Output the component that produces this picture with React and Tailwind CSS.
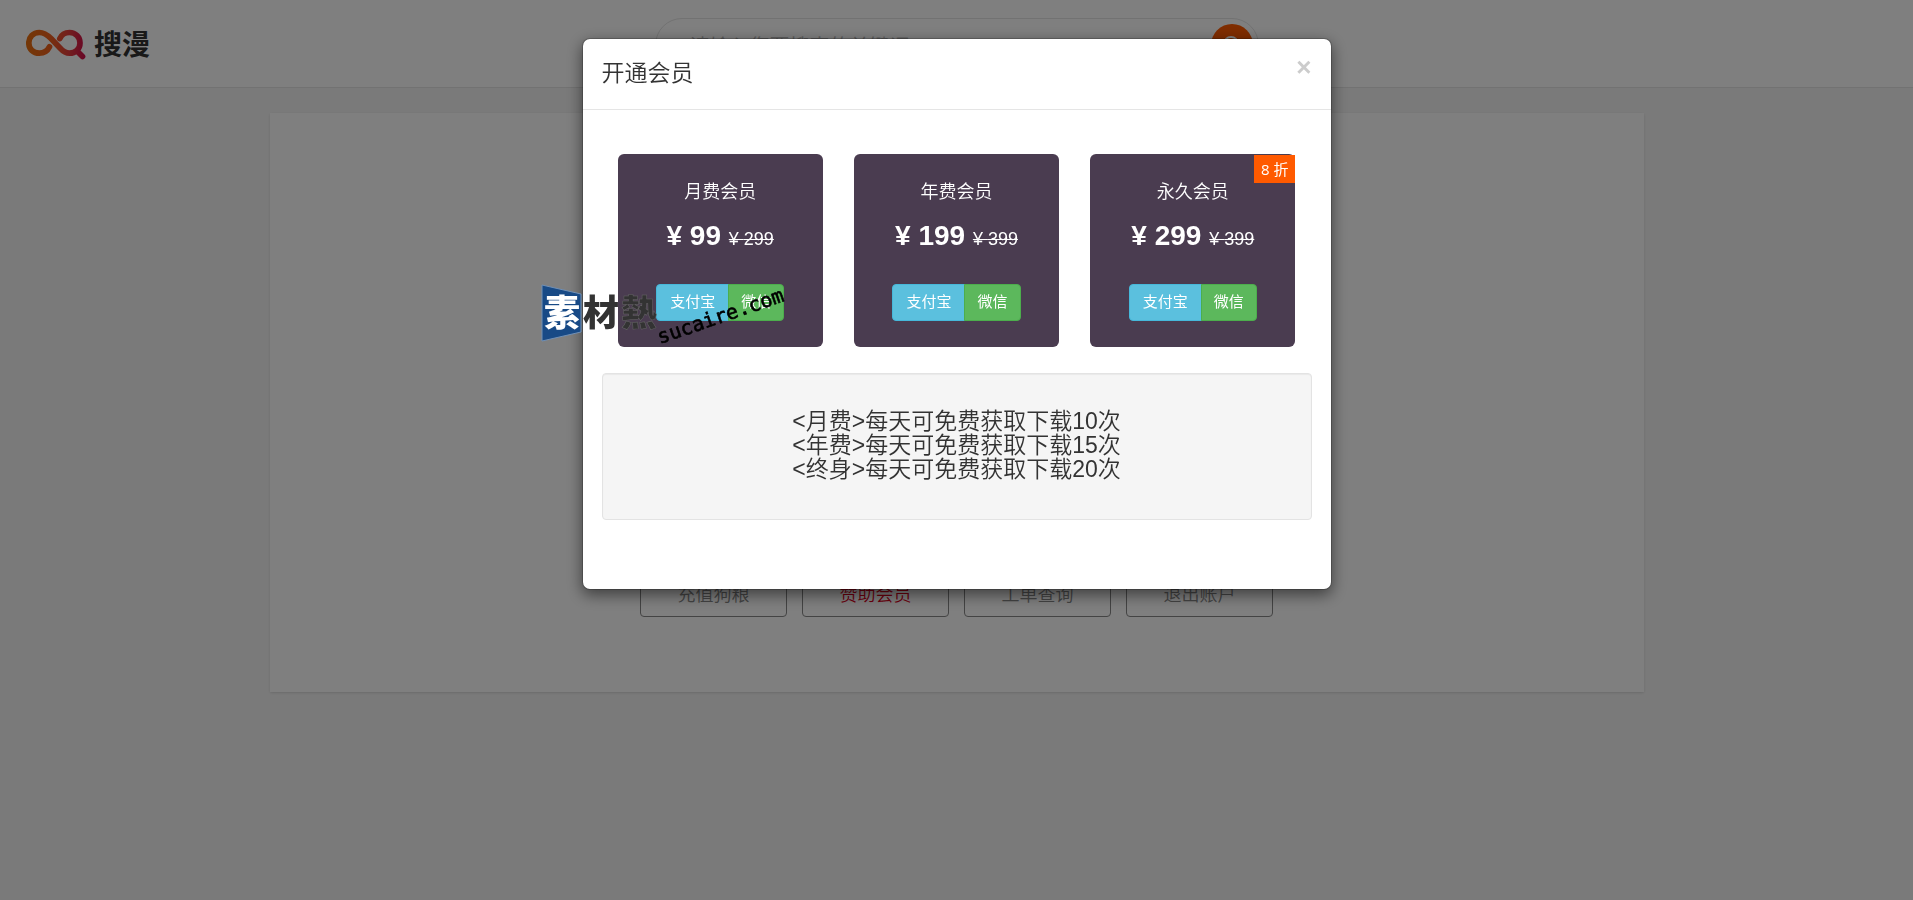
import React from 'react'

const plans = [
  { name: '月费会员', price: 99, old: 299 },
  { name: '年费会员', price: 199, old: 399 },
  { name: '永久会员', price: 299, old: 399, badge: '8 折' },
]

const notes = ['<月费>每天可免费获取下载10次', '<年费>每天可免费获取下载15次', '<终身>每天可免费获取下载20次']

const actions = [
  { label: '充值狗粮' },
  { label: '赞助会员', active: true },
  { label: '工单查询' },
  { label: '退出账户' },
]

function Logo() {
  return (
    <a href="#" className="flex items-center gap-2">
      <svg width="60" height="32" viewBox="0 0 60 32" fill="none" aria-hidden="true">
        <defs>
          <linearGradient id="logo" x1="0" y1="0" x2="60" y2="0" gradientUnits="userSpaceOnUse">
            <stop offset="0" stopColor="#e8700f" />
            <stop offset="0.4" stopColor="#f0601c" />
            <stop offset="0.7" stopColor="#e6403c" />
            <stop offset="1" stopColor="#d00a4c" />
          </linearGradient>
        </defs>
        <path
          d="M23.5 18.8C21.5 23 18 25.2 13.3 25.200C7.200 25.200 2.800 21 2.800 15C2.800 9 7.200 4.500 13.300 4.500C18 4.500 21.500 7 25 10.500L34 20C37 23.300 39.500 25.200 43.500 25.200C49.500 25.200 54 21 54 15C54 9 49.500 4.500 43.500 4.500C39 4.500 35.500 6.800 33.800 10.600M51.500 23.500L56.500 28.500"
          stroke="url(#logo)"
          strokeWidth="5.700"
          strokeLinecap="round"
          strokeLinejoin="round"
        />
      </svg>
      <span className="pt-1 text-[28px] leading-8 font-bold text-[#333]">搜漫</span>
    </a>
  )
}

function Header() {
  return (
    <header className="relative flex h-[88px] items-center border-b border-[#e4e4e4] bg-white px-[26px]">
      <Logo />
      <form className="absolute top-[18px] left-1/2 flex h-[54px] w-[604px] -translate-x-1/2 items-center rounded-full border border-[#e4e4e4] pr-[5px] pl-[34px]">
        <input
          type="text"
          aria-label="搜索"
          placeholder="请输入您要搜索的关键词"
          className="min-w-0 flex-1 pt-1 text-xl outline-none placeholder:text-[#bbb]"
        />
        <button type="button" aria-label="搜索" className="flex h-[42px] w-[42px] items-center justify-center rounded-full bg-[#ff5a00] text-white">
          <svg width="18" height="18" viewBox="0 0 18 18" fill="none" stroke="currentColor" strokeWidth="2">
            <circle cx="8" cy="8" r="7" />
            <path d="M13 13L17 17" />
          </svg>
        </button>
      </form>
    </header>
  )
}

function PlanCard({ plan }) {
  return (
    <div className="relative flex-1 rounded-md bg-[#4a3c50] pt-6 pb-[26px] text-center text-white">
      {plan.badge && (
        <span className="absolute top-px right-0 bg-[#ff5a00] px-[7px] py-1 font-['Open_Sans','Noto_Sans_CJK_SC',sans-serif] text-[15px] leading-5">
          {plan.badge}
        </span>
      )}
      <h4 className="text-lg leading-7 font-[350]">{plan.name}</h4>
      <p className="mt-[10px] text-[28px] leading-10 font-bold">
        ¥ {plan.price} <del className="text-lg font-normal">¥ {plan.old}</del>
      </p>
      <div className="mt-7 flex justify-center">
        <button type="button" className="h-[37px] rounded-l border border-[#46b8da] bg-[#5bc0de] px-[13px] text-[15px]">支付宝</button>
        <button type="button" className="-ml-px h-[37px] rounded-r border border-[#4cae4c] bg-[#5cb85c] px-3 text-[15px]">微信</button>
      </div>
    </div>
  )
}

function Watermark() {
  return (
    <div className="pointer-events-none absolute top-[247px] -left-10">
      <svg width="250" height="70" viewBox="0 0 250 70" className="overflow-visible" aria-hidden="true">
        <path d="M0 0L39 9V47L0 56Z" fill="#184a86" stroke="#6f8fb5" strokeWidth="1" />
        <g fontFamily="'Noto Sans CJK SC', sans-serif" fontWeight="900" fontSize="36">
          <text x="2" y="41" fill="#fff">素</text>
          <text x="41" y="41" fill="#333">材</text>
          <text x="79" y="41" fill="#333" stroke="#666" strokeWidth="0.500">熱</text>
        </g>
        <text x="118" y="59" transform="rotate(-19 118 59)" fontFamily="'DejaVu Sans Mono', monospace" fontSize="20" fill="#000" stroke="#000" strokeWidth="0.600">sucaire.com</text>
      </svg>
    </div>
  )
}

function MemberDialog() {
  return (
    <div role="dialog" aria-labelledby="dialog-title" className="rounded-lg border border-black/20 bg-white bg-clip-padding shadow-[0_5px_15px_rgba(0,0,0,0.5)]">
      <div className="flex items-start justify-between border-b border-[#e5e5e5] px-[19px] pt-[18px] pb-[19px]">
        <h2 id="dialog-title" className="text-[23px] leading-[33px] font-[350] text-[#333]">开通会员</h2>
        <button type="button" aria-label="关闭" className="text-[26px] leading-5 font-bold text-[#ccc]">×</button>
      </div>
      <div className="px-[19px] pt-11 pb-[69px]">
        <div className="flex gap-[31px] px-4">
          {plans.map((plan) => (
            <PlanCard key={plan.name} plan={plan} />
          ))}
        </div>
        <div className="mt-[26px] rounded border border-[#e3e3e3] bg-[#f5f5f5] pt-[35px] pb-[38px] text-center text-[23px] leading-6 font-[350] text-[#333] shadow-[inset_0_1px_1px_rgba(0,0,0,0.05)]">
          {notes.map((note) => (
            <p key={note}>{note}</p>
          ))}
        </div>
      </div>
    </div>
  )
}

export default function App() {
  return (
    <div className="min-h-screen bg-[#f5f5f5] font-['Liberation_Sans','Noto_Sans_CJK_SC',sans-serif]">
      <Header />
      <main className="mx-auto mt-[25px] flex h-[579px] w-full max-w-[1374px] items-end justify-center bg-white pb-[75px] shadow-sm">
        <div className="flex gap-[15px]">
          {actions.map((item) => (
            <button
              key={item.label}
              type="button"
              className={`h-11 w-[147px] rounded border border-[#888] text-lg font-[350] ${item.active ? 'text-[#d9001b]' : 'text-[#888]'}`}
            >
              {item.label}
            </button>
          ))}
        </div>
      </main>
      <div className="fixed inset-0 flex items-start justify-center bg-black/50 pt-[38px]">
        <div className="relative w-[750px]">
          <MemberDialog />
          <Watermark />
        </div>
      </div>
    </div>
  )
}
